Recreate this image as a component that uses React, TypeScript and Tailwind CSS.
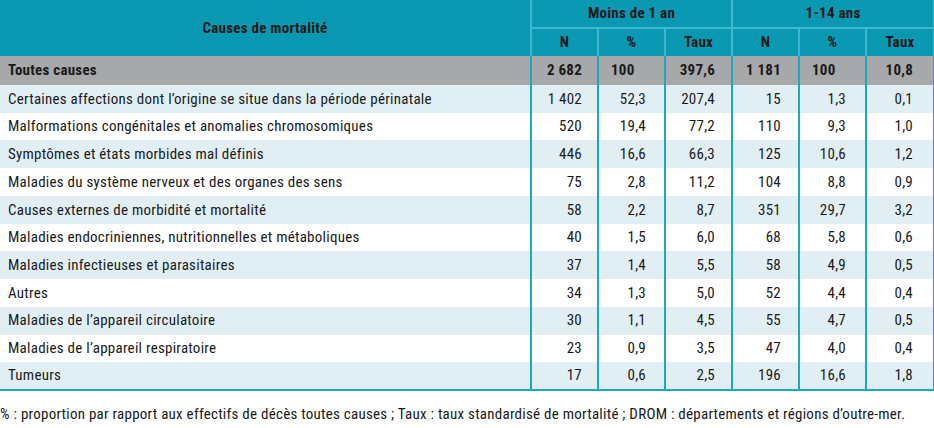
import React from 'react';

const rows: [string, string, string, string, string, string, string][] = [
  ['Certaines affections dont l’origine se situe dans la période périnatale', '1 402', '52,3', '207,4', '15', '1,3', '0,1'],
  ['Malformations congénitales et anomalies chromosomiques', '520', '19,4', '77,2', '110', '9,3', '1,0'],
  ['Symptômes et états morbides mal définis', '446', '16,6', '66,3', '125', '10,6', '1,2'],
  ['Maladies du système nerveux et des organes des sens', '75', '2,8', '11,2', '104', '8,8', '0,9'],
  ['Causes externes de morbidité et mortalité', '58', '2,2', '8,7', '351', '29,7', '3,2'],
  ['Maladies endocriniennes, nutritionnelles et métaboliques', '40', '1,5', '6,0', '68', '5,8', '0,6'],
  ['Maladies infectieuses et parasitaires', '37', '1,4', '5,5', '58', '4,9', '0,5'],
  ['Autres', '34', '1,3', '5,0', '52', '4,4', '0,4'],
  ['Maladies de l’appareil circulatoire', '30', '1,1', '4,5', '55', '4,7', '0,5'],
  ['Maladies de l’appareil respiratoire', '23', '0,9', '3,5', '47', '4,0', '0,4'],
  ['Tumeurs', '17', '0,6', '2,5', '196', '16,6', '1,8'],
];

// right padding per numeric column, read off the picture
const pads = ['pr-[15px]', 'pr-[18px]', 'pr-[16px]', 'pr-[17px]', 'pr-[19px]', 'pr-[20px]'];

const App = () => {
  return (
    <div className="w-[934px] h-[428px] bg-white text-[#1a1a1a] text-[15px] tracking-[0.25px] [font-family:'Roboto_Condensed','Liberation_Sans_Narrow','DejaVu_Sans_Condensed','Arial_Narrow',Roboto,sans-serif] [font-stretch:condensed]">
      <table className="w-[934px] border-collapse table-fixed">
        <colgroup>
          <col className="w-[531px]" />
          <col className="w-[67px]" />
          <col className="w-[67px]" />
          <col className="w-[67px]" />
          <col className="w-[67px]" />
          <col className="w-[67px]" />
          <col className="w-[68px]" />
        </colgroup>
        <thead className="bg-[#0a98b2]">
          <tr className="h-[28px]">
            <th rowSpan={2} className="text-center font-bold border-r-2 border-[#3db8cc]">Causes de mortalité</th>
            <th colSpan={3} className="text-center font-bold border-r-2 border-b-2 border-[#3db8cc]">Moins de 1 an</th>
            <th colSpan={3} className="text-center font-bold border-r-2 border-b-2 border-[#3db8cc]">1-14 ans</th>
          </tr>
          <tr className="h-[28px]">
            {['N', '%', 'Taux', 'N', '%', 'Taux'].map((h, i) => (
              <th key={i} className="text-center font-bold border-r-2 border-[#3db8cc]">{h}</th>
            ))}
          </tr>
        </thead>
        <tbody>
          <tr className="h-[29px] bg-[#a6a8aa] font-bold">
            <td className="pl-2 border-r-2 border-[#1aaabf]">Toutes causes</td>
            <td className="text-right pr-[15px] border-r-2 border-[#1aaabf]">2 682</td>
            <td className="text-left pl-[12px] border-r-2 border-[#1aaabf]">100</td>
            <td className="text-right pr-[16px] border-r-2 border-[#1aaabf]">397,6</td>
            <td className="text-right pr-[17px] border-r-2 border-[#1aaabf]">1 181</td>
            <td className="text-left pl-[12px] border-r-2 border-[#1aaabf]">100</td>
            <td className="text-right pr-[20px] border-r-2 border-[#1aaabf]">10,8</td>
          </tr>
          {rows.map((r, i) => (
            <tr key={i} className={`${i % 2 === 0 ? 'h-[28px] bg-[#e1eff5]' : 'h-[27.4px] bg-white'} ${i === rows.length - 1 ? 'border-b-2 border-[#1aaabf]' : ''}`}>
              <td className="pl-2 border-r-2 border-[#1aaabf] whitespace-nowrap">{r[0]}</td>
              {r.slice(1).map((v, j) => (
                <td key={j} className={`text-right ${pads[j]} border-r-2 border-[#1aaabf]`}>{v}</td>
              ))}
            </tr>
          ))}
        </tbody>
      </table>
      <p className="mt-[12px] whitespace-nowrap">
        % : proportion par rapport aux effectifs de décès toutes causes ; Taux : taux standardisé de mortalité ; DROM : départements et régions d’outre-mer.
      </p>
    </div>
  );
};

export default App;
